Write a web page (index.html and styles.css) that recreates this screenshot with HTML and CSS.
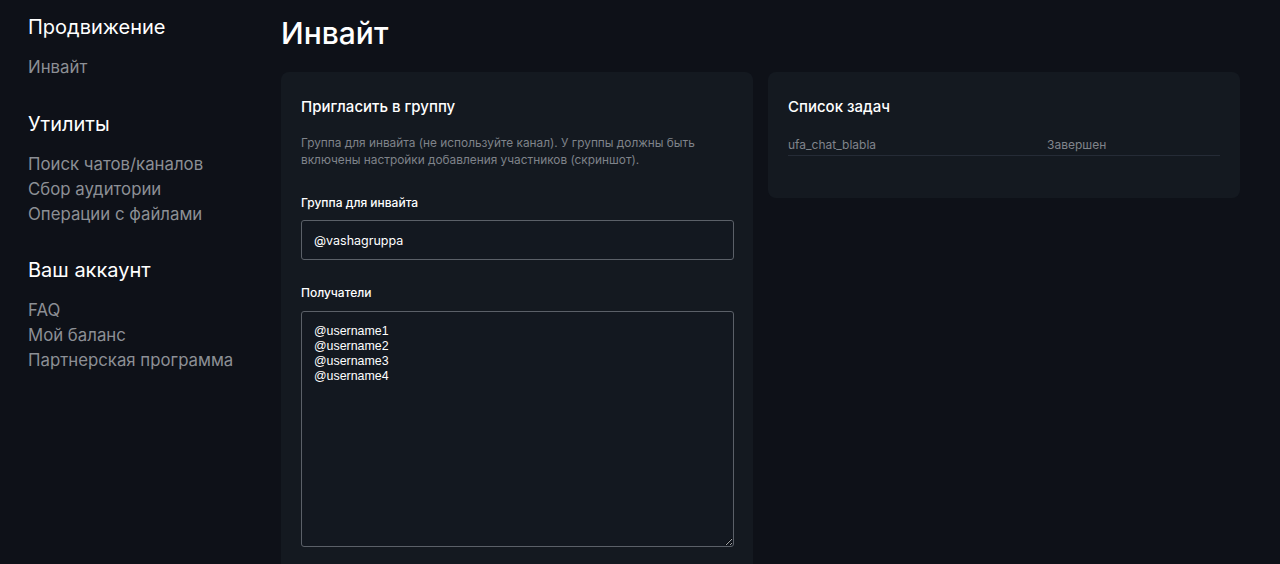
FILE: index.html
```html
<!DOCTYPE html>
<html>
<head>
  <meta charset="utf-8">
  <title>Инвайт</title>
  <link rel="stylesheet" href="styles.css">
</head>
<body>
  <div class="layout">
    <nav class="sidebar">
      <div class="nav-group">
        <h3>Продвижение</h3>
        <a href="#">Инвайт</a>
      </div>
      <div class="nav-group">
        <h3>Утилиты</h3>
        <a href="#">Поиск чатов/каналов</a>
        <a href="#">Сбор аудитории</a>
        <a href="#">Операции с файлами</a>
      </div>
      <div class="nav-group">
        <h3>Ваш аккаунт</h3>
        <a href="#">FAQ</a>
        <a href="#">Мой баланс</a>
        <a href="#">Партнерская программа</a>
      </div>
    </nav>

    <main class="content">
      <h1>Инвайт</h1>
      <div class="cards">
        <div class="card">
          <h2>Пригласить в группу</h2>
          <p class="hint">Группа для инвайта (не используйте канал). У группы должны быть включены настройки добавления участников (скриншот).</p>
          <label class="field-label" for="group">Группа для инвайта</label>
          <input id="group" class="field" type="text" value="@vashagruppa">
          <label class="field-label label-area" for="targets">Получатели</label>
          <textarea id="targets" class="field area">@username1
@username2
@username3
@username4</textarea>
        </div>

        <div class="card card-short">
          <h2>Список задач</h2>
          <table class="tasks">
            <tr>
              <td class="task-name">ufa_chat_blabla</td>
              <td>Завершен</td>
            </tr>
          </table>
        </div>
      </div>
    </main>
  </div>
</body>
</html>
```

FILE: styles.css
```css
body {
  margin: 0;
  background: #0e1118;
  color: #fff;
  font-family: Inter, "Noto Sans", sans-serif;
}
.layout {
  display: grid;
  grid-template-columns: 281px 959px;
  padding: 15px 0 0;
}
.sidebar {
  padding-left: 28px;
}
.nav-group {
  display: flex;
  flex-direction: column;
  margin-bottom: 31.5px;
}
.nav-group h3 {
  margin: 0 0 16px;
  font-size: 20px;
  font-weight: 400;
  line-height: 24px;
  color: #fff;
}
.nav-group a {
  color: #8c8f95;
  text-decoration: none;
  font-size: 16.8px;
  line-height: 25px;
}
.content h1 {
  margin: 0 0 21px;
  font-size: 30px;
  font-weight: 500;
  line-height: 36px;
}
.cards {
  display: grid;
  grid-template-columns: 472px 472px;
  gap: 15px;
  align-items: start;
}
.card {
  background: #141920;
  border-radius: 8px;
  padding: 25px 20px 40px;
}
.card h2 {
  margin: 0;
  font-size: 15px;
  font-weight: 500;
  line-height: 20px;
}
.hint {
  margin: 18px 0 26px;
  font-size: 11.85px;
  line-height: 17px;
  color: #7f838a;
}
.field-label {
  display: block;
  font-size: 12px;
  font-weight: 500;
  line-height: 16px;
  margin-bottom: 9px;
}
.label-area {
  margin-bottom: 10px;
}
.field {
  display: block;
  box-sizing: border-box;
  width: 433px;
  height: 40px;
  margin: 0 0 25px;
  padding: 0 12px;
  background: #131820;
  border: 1px solid #5b6068;
  border-radius: 3px;
  color: #fff;
  font-family: Inter, "Noto Sans", sans-serif;
  font-size: 12.5px;
}
.area {
  height: 236px;
  margin-bottom: 0;
  padding: 12px;
  font-family: "Liberation Sans", Arial, sans-serif;
  font-size: 12.4px;
  line-height: 15px;
  resize: vertical;
}
.card-short {
  padding-bottom: 42px;
}
.tasks {
  width: 100%;
  margin-top: 19px;
  border-collapse: collapse;
}
.tasks td {
  padding: 0 0 2px;
  font-size: 12px;
  line-height: 17px;
  color: #80848b;
  border-bottom: 1px solid #252b36;
}
.task-name {
  width: 259px;
}
```
